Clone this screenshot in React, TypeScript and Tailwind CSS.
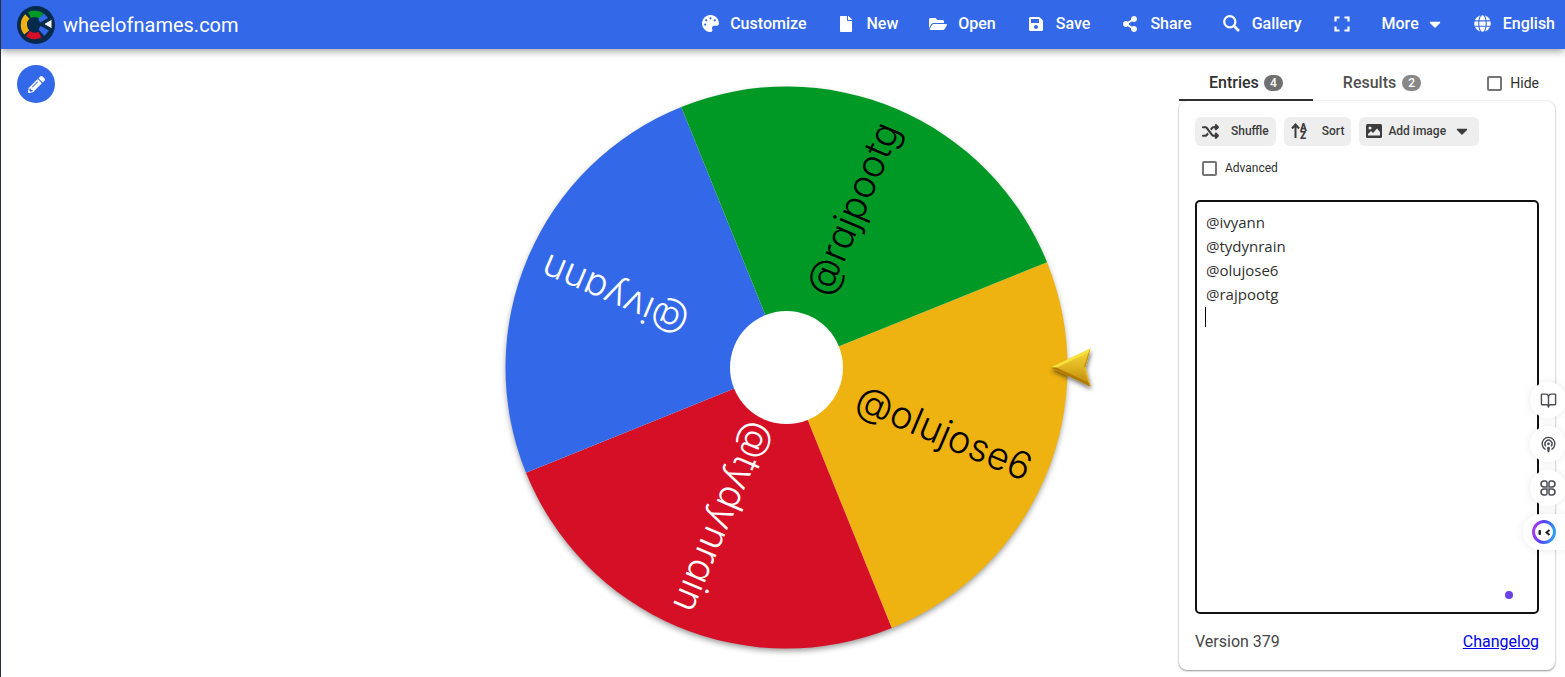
import { BookOpen, Podcast } from "lucide-react";
import type { ReactNode } from "react";
import {
  FaCaretDown,
  FaFile,
  FaFolderOpen,
  FaGlobe,
  FaPalette,
  FaPencilAlt,
  FaSave,
  FaShareAlt,
} from "react-icons/fa";
import { FaShuffle } from "react-icons/fa6";

const slices = [
  { name: "@olujose6", color: "#eeb211", text: "#000000", angle: 23 },
  { name: "@tydynrain", color: "#d50f25", text: "#ffffff", angle: 113 },
  { name: "@ivyann", color: "#3369e8", text: "#ffffff", angle: 203 },
  { name: "@rajpootg", color: "#009925", text: "#000000", angle: 293 },
];

const SearchIcon = () => (
  <svg viewBox="0 0 17 17" className="size-[17px]" fill="none" stroke="currentColor">
    <circle cx="6.800" cy="6.800" r="5.600" strokeWidth="2.200" />
    <path d="m11 11 5 5" strokeWidth="2.600" />
  </svg>
);

const menu = [
  { label: "Customize", icon: <FaPalette size={17} /> },
  { label: "New", icon: <FaFile size={16} /> },
  { label: "Open", icon: <FaFolderOpen size={18} /> },
  { label: "Save", icon: <FaSave size={16} /> },
  { label: "Share", icon: <FaShareAlt size={16} /> },
  { label: "Gallery", icon: <SearchIcon /> },
];

const Logo = () => (
  <svg viewBox="0 0 38 38" className="size-[38px]" aria-hidden="true">
    <circle cx="19" cy="19" r="19" fill="#062a4c" />
    <g fill="none" strokeWidth="6.500">
      <path d="M12.5 9A11.8 11.8 0 0 1 24.5 10" stroke="#009925" />
      <path d="M9.7 26.500A11.8 11.8 0 0 1 10.5 10.600" stroke="#eeb211" />
      <path d="M23 28.600A11.8 11.8 0 0 1 10.8 27.600" stroke="#d50f25" />
    </g>
    <path d="M27 7.500 31 12l-8 4.500-2-3z" fill="#3369e8" />
    <path d="M23.5 20 32 24.500l-4.500 5.500-6-6.500z" fill="#3369e8" />
    <circle cx="16.500" cy="18" r="6.500" fill="#062a4c" />
    <path d="M26.500 18 35 13v10z" fill="#f4f4f4" stroke="#062a4c" />
  </svg>
);

const ExpandIcon = () => (
  <svg viewBox="0 0 16 16" className="size-4" fill="none" stroke="currentColor" strokeWidth="2.200">
    <path d="M1.500 5.500v-4h4M10.500 1.500h4v4M14.500 10.500v4h-4M5.500 14.500h-4v-4" />
  </svg>
);

const SortIcon = () => (
  <svg viewBox="0 0 17 16" className="h-4 w-[17px]" fill="currentColor" aria-hidden="true">
    <path
      d="M4.500 15V2M1 5.500l3.500-4 3.500 4"
      fill="none"
      stroke="currentColor"
      strokeWidth="2"
    />
    <text x="9" y="7.500" className="text-[10px] font-black">
      A
    </text>
    <text x="9" y="15.500" className="text-[10px] font-black">
      Z
    </text>
  </svg>
);

const ImageIcon = () => (
  <svg viewBox="0 0 16 16" className="size-4" aria-hidden="true">
    <rect y="1" width="16" height="14" rx="1.500" fill="currentColor" />
    <circle cx="4" cy="5" r="1.500" fill="#eeeeee" />
    <path d="M2 12.500V11l3-3 2 2 4-4.500 3 3.500v3.500z" fill="#eeeeee" />
  </svg>
);

const NavButton = ({ icon, label }: { icon: ReactNode; label: string }) => (
  <button className="flex items-center gap-2">
    <span className="flex w-6 justify-center">{icon}</span>
    {label}
  </button>
);

const Header = () => (
  <header className="relative z-10 flex h-[49px] items-center bg-[#3369e8] pl-4 pr-[10px] text-white shadow-[0_2px_8px_rgba(0,0,0,0.4)]">
    <a href="#" className="flex items-center gap-2">
      <Logo />
      <span className="text-xl">wheelofnames.com</span>
    </a>
    <nav className="ml-auto flex items-center gap-7 pb-[2px] text-base font-medium">
      {menu.map((item) => (
        <NavButton key={item.label} {...item} />
      ))}
      <button aria-label="Fullscreen" className="flex w-6 justify-center">
        <ExpandIcon />
      </button>
      <button className="flex items-center gap-2">
        More
        <span className="flex w-4 justify-center">
          <FaCaretDown size={18} />
        </span>
      </button>
      <NavButton icon={<FaGlobe size={17} />} label="English" />
    </nav>
  </header>
);

// Quarter of the disc, drawn around the x axis and rotated into place
const SLICE = "M0 0 198.700-198.700A281 281 0 0 1 198.700 198.700Z";

const Wheel = () => (
  <svg
    viewBox="-310.5 -310.5 620 620"
    className="mt-2 h-auto w-full max-w-[620px]"
    role="img"
    aria-label="Wheel of names"
  >
    <defs>
      <filter id="wheelShadow" x="-10%" y="-10%" width="120%" height="120%">
        <feDropShadow dx="0" dy="3" stdDeviation="3" floodOpacity="0.45" />
      </filter>
      <filter id="pointerShadow" x="-30%" y="-30%" width="160%" height="160%">
        <feDropShadow dx="1" dy="3" stdDeviation="2" floodOpacity="0.5" />
      </filter>
      <linearGradient id="gold" x1="0" y1="0" x2="0" y2="1">
        <stop offset="0" stopColor="#f5d93a" />
        <stop offset="0.5" stopColor="#dfb322" />
        <stop offset="1" stopColor="#b98108" />
      </linearGradient>
    </defs>
    <circle r="280" fill="#ffffff" filter="url(#wheelShadow)" />
    {slices.map((s) => (
      <g key={s.name} transform={`rotate(${s.angle})`}>
        <path d={SLICE} fill={s.color} />
        <text
          x="264"
          y="12"
          textAnchor="end"
          fill={s.text}
          className="font-['Inter',sans-serif] text-[38px] font-light [font-feature-settings:'cv11']"
        >
          {s.name}
        </text>
      </g>
    ))}
    <circle r="56.500" fill="#ffffff" />
    <g filter="url(#pointerShadow)">
      <path d="M264 0 304-19 299 0 304 19Z" fill="url(#gold)" />
      <path d="M264 0 304-19 302-15 270 0Z" fill="#f8e33e" />
      <path d="M264 0 304 19 302 15 270 0Z" fill="#b27a05" />
      <path d="M304-19 299 0 297 0 302-15Z" fill="#c99514" />
      <path d="M304 19 299 0 297 0 302 15Z" fill="#e5bb2a" />
    </g>
  </svg>
);

const Tick = ({ label, className }: { label: string; className: string }) => (
  <label className={`flex items-center gap-2 text-[#303030] ${className}`}>
    <input
      type="checkbox"
      className="size-[15px] appearance-none rounded-xs border-2 border-[#757575]"
    />
    {label}
  </label>
);

const Badge = ({ count, className }: { count: number; className: string }) => (
  <span
    className={`flex h-4 w-[19px] items-center justify-center rounded-full text-xs text-white ${className}`}
  >
    {count}
  </span>
);

const toolButton =
  "flex h-[29px] items-center rounded-md bg-[#eeeeee] px-[7px] pb-px text-xs font-medium text-[#3c3c3c]";

const EntriesPanel = () => (
  <aside className="mr-[10px] flex w-[376px] shrink-0 flex-col pb-[7px] pt-4">
    <div className="flex h-9 items-stretch font-medium">
      <button className="flex items-center justify-center gap-[5px] border-b-2 border-[#303030] px-[30px] pt-[2px] text-[#303030]">
        Entries <Badge count={4} className="bg-[#707070]" />
      </button>
      <button className="flex items-center justify-center gap-[6px] border-b-2 border-transparent px-[30px] pt-[2px] text-[#505050]">
        Results <Badge count={2} className="bg-[#888888]" />
      </button>
      <Tick label="Hide" className="ml-auto pr-4 text-sm font-normal" />
    </div>
    <div className="flex flex-1 flex-col rounded-lg bg-white p-4 shadow-[0_1px_2px_rgba(0,0,0,0.4),0_0_2px_rgba(0,0,0,0.15)]">
      <div className="flex gap-2">
        <button className={`${toolButton} gap-3`}>
          <FaShuffle size={17} /> Shuffle
        </button>
        <button className={`${toolButton} gap-[14px]`}>
          <SortIcon /> Sort
        </button>
        <button className={`${toolButton} gap-[6px]`}>
          <ImageIcon /> Add image
          <span className="flex w-5 justify-center">
            <FaCaretDown size={18} />
          </span>
        </button>
      </div>
      <Tick label="Advanced" className="mt-[14px] h-4 pl-[7px] text-xs" />
      <div className="relative mt-6 flex flex-1">
        <textarea
          aria-label="Entries"
          spellCheck={false}
          className="w-full resize-none rounded-[5px] border-2 border-[#111111] bg-white px-[9px] py-2 font-['Open_Sans',sans-serif] text-[15px] leading-6 text-[#303030] outline-none"
          defaultValue={"@ivyann\n@tydynrain\n@olujose6\n@rajpootg\n"}
        />
        <span className="absolute left-[10px] top-[107px] h-5 w-px bg-black" />
        <span className="absolute bottom-[15px] right-[26px] size-2 rounded-full bg-[#6b41e6]" />
      </div>
      <div className="mt-4 flex justify-between text-[#454545]">
        <span>Version 379</span>
        <a href="#" className="text-[#0000ee] underline">
          Changelog
        </a>
      </div>
    </div>
  </aside>
);

const Leaves = () => (
  <svg viewBox="0 0 16 16" className="size-4" fill="none" stroke="currentColor" strokeWidth="1.500">
    <path d="M4 1h1.500A1.500 1.500 0 0 1 7 2.500V7H4a3 3 0 0 1 0-6Z" />
    <path d="M12 1h-1.500A1.500 1.500 0 0 0 9 2.500V7h3a3 3 0 0 0 0-6Z" />
    <path d="M4 15h1.500A1.500 1.500 0 0 0 7 13.500V9H4a3 3 0 0 0 0 6Z" />
    <path d="M12 15h-1.500A1.500 1.500 0 0 1 9 13.500V9h3a3 3 0 0 1 0 6Z" />
  </svg>
);

const Robot = () => (
  <svg viewBox="0 0 24 24" className="size-6">
    <defs>
      <linearGradient id="ring" x1="0" y1="0.6" x2="1" y2="0.8">
        <stop offset="0" stopColor="#a03df0" />
        <stop offset="0.4" stopColor="#4d45f5" />
        <stop offset="1" stopColor="#2fa6f0" />
      </linearGradient>
    </defs>
    <circle cx="12" cy="12" r="10.500" fill="#ffffff" stroke="url(#ring)" strokeWidth="3" />
    <rect x="6.500" y="10" width="2.500" height="5" rx="1" fill="#222222" />
    <path d="m17.500 10-3 2.500 3 2.500" fill="none" stroke="#222222" strokeWidth="2" />
  </svg>
);

const round =
  "flex size-9 items-center justify-center rounded-full bg-white text-[#4b4b55] shadow-[0_0_10px_rgba(0,0,0,0.08)]";

const SideDock = () => (
  <div className="absolute right-0 top-[382px] z-20 flex flex-col items-end gap-2">
    <button aria-label="Read" className={`${round} -mr-px`}>
      <BookOpen size={17} strokeWidth={2} />
    </button>
    <button aria-label="Podcast" className={`${round} -mr-px`}>
      <Podcast size={17} strokeWidth={2} />
    </button>
    <button aria-label="Apps" className={`${round} -mr-px`}>
      <Leaves />
    </button>
    <button
      aria-label="Assistant"
      className="flex h-9 w-[42px] items-center rounded-l-full bg-white pl-[9px] shadow-[0_0_10px_rgba(0,0,0,0.08)]"
    >
      <Robot />
    </button>
  </div>
);

const App = () => {
  return (
    <div className="relative flex min-h-screen flex-col overflow-hidden border-l border-[#2b2f36] bg-white font-['Roboto',sans-serif]">
      <Header />
      <div className="flex flex-1">
        <div className="w-[392px] shrink p-4">
          <button
            aria-label="Edit title"
            className="flex size-[38px] items-center justify-center rounded-full bg-[#3369e8] text-white"
          >
            <FaPencilAlt size={17} />
          </button>
        </div>
        <main className="flex min-w-0 flex-1 items-start justify-center">
          <Wheel />
        </main>
        <EntriesPanel />
      </div>
      <SideDock />
    </div>
  );
};

export default App;
